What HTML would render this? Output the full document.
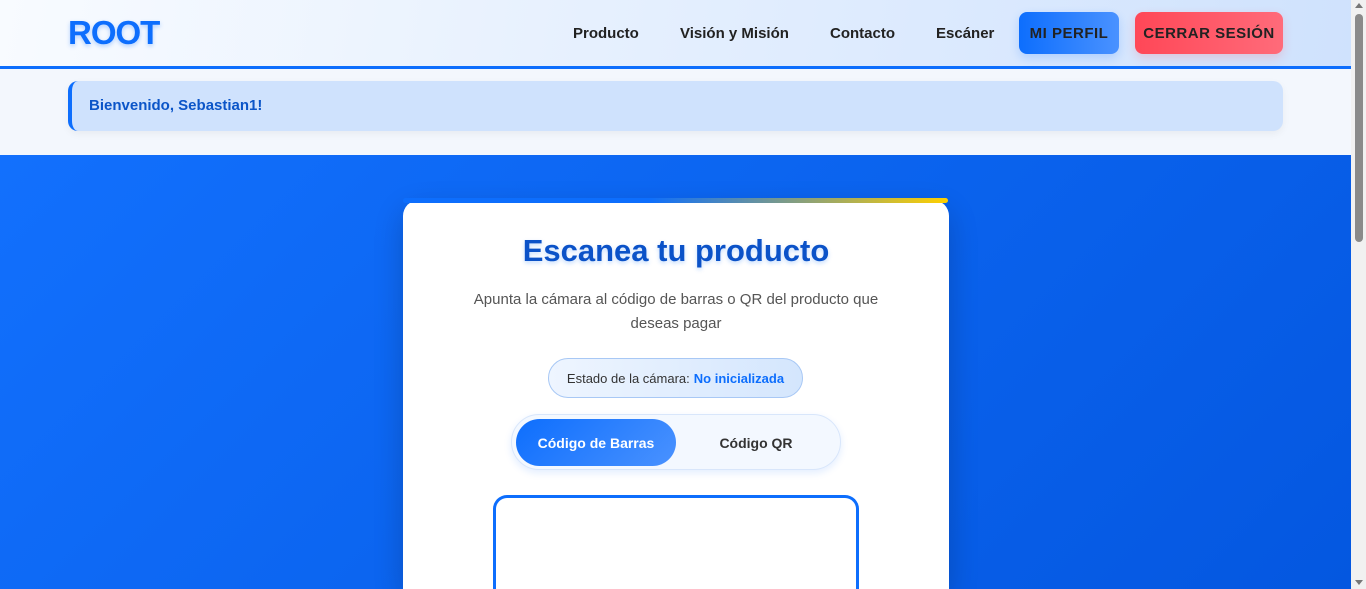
<!DOCTYPE html>
<html><head><meta charset="utf-8"><style>
*{box-sizing:border-box;margin:0;padding:0}
html{width:1366px;height:589px;overflow:hidden}
body{width:1366px;height:589px;overflow:hidden;font-family:"Liberation Sans",sans-serif;background:#f3f7fd;position:relative}
.sb{position:absolute;right:0;top:0;width:15px;height:589px;background:#f1f1f1;z-index:9}
.sb .t{position:absolute;left:4px;top:14px;width:8px;height:228px;background:#8a8a8a;border-radius:4px}
.sb .a{position:absolute;left:4px;top:3px;width:0;height:0;border-left:4px solid transparent;border-right:4px solid transparent;border-bottom:5px solid #777}
.sb .b{position:absolute;left:4px;bottom:4px;width:0;height:0;border-left:4px solid transparent;border-right:4px solid transparent;border-top:5px solid #777}
.hdr{position:absolute;left:0;top:0;width:1351px;height:69px;background:linear-gradient(100deg,#f8fbff,#cfe2fd);border-bottom:3px solid #0d6efd}
.logo{position:absolute;left:68px;top:14px;font-size:33px;font-weight:900;color:#0d6efd;letter-spacing:-1px;text-shadow:0 2px 4px rgba(13,110,253,.3)}
.nav{position:absolute;top:25px;font-size:15px;color:#222;font-weight:600}
.btn{position:absolute;top:12px;height:42px;border-radius:8px;font-size:15px;color:#222;font-weight:600;display:flex;align-items:center;justify-content:center;letter-spacing:.5px;box-shadow:0 4px 10px rgba(13,110,253,.2)}
.wel{position:absolute;left:68px;top:81px;width:1215px;height:50px;background:#cfe2fd;border-left:4px solid #0d6efd;border-radius:10px;font-size:15px;color:#0b55c8;font-weight:600;padding:16px 0 0 17px;box-shadow:0 3px 8px rgba(0,0,0,.05)}
.hero{position:absolute;left:0;top:155px;width:1351px;height:434px;background:linear-gradient(135deg,#1270fd,#0457e0);overflow:hidden}
.card{position:absolute;left:403px;top:45px;width:546px;height:389px;background:#fff;border-radius:16px 16px 0 0;box-shadow:0 10px 30px rgba(0,0,0,.2)}
.bar{position:absolute;left:403px;top:43px;width:545px;height:5px;border-radius:4px;background:linear-gradient(90deg,#0d6efd 45%,#ffd000)}
h1{position:absolute;left:403px;width:546px;top:78px;text-align:center;font-size:31px;font-weight:900;color:#0b52c8;text-shadow:0 2px 4px rgba(13,110,253,.25)}
.p{position:absolute;left:450px;width:452px;top:133px;text-align:center;font-size:15px;line-height:24px;color:#555}
.st{position:absolute;left:548px;top:203px;width:255px;height:40px;border:1px solid #a8c8f5;border-radius:20px;background:linear-gradient(90deg,#eef5ff,#d4e6fd);font-size:13px;color:#333;display:flex;align-items:center;justify-content:center}
.st b{color:#0d6efd;margin-left:4px}
.tg{position:absolute;left:511px;top:259px;width:330px;height:56px;border:1px solid #d8e6fb;border-radius:28px;background:#f3f8ff;box-shadow:0 3px 8px rgba(13,110,253,.12)}
.tg div{position:absolute;top:4px;height:47px;border-radius:24px;font-size:14px;font-weight:700;display:flex;align-items:center;justify-content:center}
.cam{position:absolute;left:493px;top:340px;width:366px;height:94px;border:3px solid #0d6efd;border-bottom:none;border-radius:14px 14px 0 0;background:#fff}
</style></head><body>
<div class="hdr">
<div class="logo">ROOT</div>
<div class="nav" style="left:573px">Producto</div>
<div class="nav" style="left:680px">Visión y Misión</div>
<div class="nav" style="left:830px">Contacto</div>
<div class="nav" style="left:936px">Escáner</div>
<div class="btn" style="left:1019px;width:100px;background:linear-gradient(90deg,#0d6efd,#4a92ff)">MI PERFIL</div>
<div class="btn" style="left:1135px;width:148px;background:linear-gradient(90deg,#ff4757,#ff6b7a);box-shadow:0 4px 10px rgba(255,71,87,.2)">CERRAR SESIÓN</div>
</div>
<div class="wel">Bienvenido, Sebastian1!</div>
<div class="hero">
<div class="card"></div>
<div class="bar"></div>
<h1>Escanea tu producto</h1>
<div class="p">Apunta la cámara al código de barras o QR del producto que deseas pagar</div>
<div class="st">Estado de la cámara:<b>No inicializada</b></div>
<div class="tg"><div style="left:4px;width:160px;background:linear-gradient(135deg,#0d6efd,#4a92ff);color:#fff">Código de Barras</div><div style="left:164px;width:160px;color:#333">Código QR</div></div>
<div class="cam"></div>
</div>
<div class="sb"><div class="a"></div><div class="t"></div><div class="b"></div></div>
</body></html>
